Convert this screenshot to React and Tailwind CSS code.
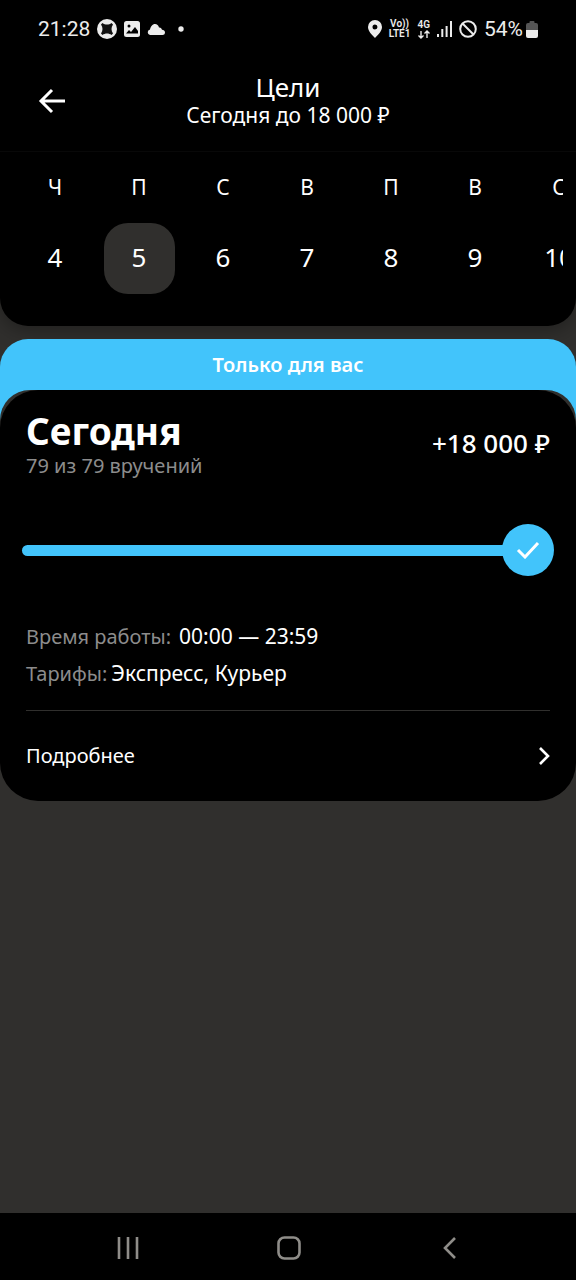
import clsx from 'clsx'

const days = [
  { name: 'Ч', date: 4 },
  { name: 'П', date: 5 },
  { name: 'С', date: 6 },
  { name: 'В', date: 7 },
  { name: 'П', date: 8 },
  { name: 'В', date: 9 },
  { name: 'С', date: 10 },
]

const goal = { done: 79, total: 79 }

function StatusBar() {
  return (
    <div className="h-14 pt-0.5 pl-[38px] pr-[38px] flex items-center justify-between font-[Roboto,sans-serif] text-[21px] leading-7 text-[#ececec]">
      <div className="flex items-center gap-[7px]">
        <span>21:28</span>
        <svg width="20" height="20" viewBox="0 0 20 20">
          <circle cx="10" cy="10" r="10" fill="currentColor" />
          <path d="M4 5.500 5.500 4C8 6 12 6 14.500 4L16 5.500c-2 3-2 6 0 9L14.500 16c-2.500-2-6.500-2-9 0L4 14.500c2-3 2-6 0-9z" fill="#111" />
        </svg>
        <svg width="16" height="16" viewBox="0 0 16 16">
          <rect width="16" height="16" rx="2.500" fill="currentColor" />
          <circle cx="5" cy="5" r="1.500" fill="#000" />
          <path d="M2 12.500 5 9l2 2 4-5 3 4v2.500z" fill="#000" />
        </svg>
        <svg width="18" height="11" viewBox="0 0 18 11">
          <path d="M3 11a2.800 2.800 0 0 1 0-5.500C3.500 2.500 5.500 0 8 0c2 0 3.500 1.300 4 3.500 1.500-.3 2.700.7 3 2.300 1.500 0 3 1 3 2.700S16.800 11 15.500 11z" fill="currentColor" />
        </svg>
        <svg width="18" height="6" viewBox="0 0 18 6">
          <circle cx="9" cy="3" r="2.700" fill="currentColor" />
        </svg>
      </div>
      <div className="flex items-center gap-[7px]">
        <svg width="14" height="18" viewBox="0 0 14 18">
          <path fillRule="evenodd" d="M7 0a7 7 0 0 1 7 7c0 4-4 8-7 11C4 15 0 11 0 7a7 7 0 0 1 7-7zm0 4.500a2.500 2.500 0 1 0 0 5 2.500 2.500 0 0 0 0-5z" fill="currentColor" />
        </svg>
        <div className="flex flex-col items-center text-[10px] leading-[10px] font-semibold">
          <span>Vo))</span>
          <span>LTE1</span>
        </div>
        <div className="flex flex-col items-center text-[10px] leading-[10px] font-semibold">
          <span>4G</span>
          <svg width="12" height="9" viewBox="0 0 12 9" fill="none" stroke="currentColor" strokeWidth="1.400">
            <path d="M3 1v7M.5 5.500 3 8l2.500-2.500M9 8V1M6.500 3.500 9 1l2.500 2.500" />
          </svg>
        </div>
        <svg width="15" height="16" viewBox="0 0 15 16" stroke="currentColor" strokeWidth="2">
          <path d="M1 13v3M5.300 8v8M9.600 5v11M14 0v16" />
        </svg>
        <svg width="18" height="18" viewBox="0 0 18 18" fill="none" stroke="currentColor" strokeWidth="2">
          <circle cx="9" cy="9" r="7.800" />
          <path d="m3.500 3.500 11 11" />
        </svg>
        <div className="flex items-center gap-[3px]">
          <span>54%</span>
          <svg width="12" height="17" viewBox="0 0 12 17">
            <path d="M3.500 2V1q0-1 1-1h3q1 0 1 1v1H10q2 0 2 2v5H0V4q0-2 2-2z" fill="#555" />
            <path d="M0 9h12v6q0 2-2 2H2q-2 0-2-2z" fill="currentColor" />
          </svg>
        </div>
      </div>
    </div>
  )
}

function Header() {
  return (
    <header className="h-24 px-6 pb-1.5 grid grid-cols-[56px_1fr_56px] items-center border-b border-[#080808]">
      <button type="button" aria-label="Назад" className="size-14 flex items-center justify-center">
        <svg width="28" height="26" viewBox="0 0 28 26" fill="none" stroke="currentColor" strokeWidth="3">
          <path d="M27 13H3M14 2 3 13l11 11" />
        </svg>
      </button>
      <div className="text-center">
        <h1 className="text-[26px] leading-7">Цели</h1>
        <p className="text-[21px] leading-7">Сегодня до 18 000 ₽</p>
      </div>
    </header>
  )
}

function Calendar() {
  return (
    <div className="mx-[13px] pt-5 pb-8 flex overflow-hidden">
      {days.map(day => (
        <button
          key={day.date}
          type="button"
          aria-pressed={day.date === 5}
          className="w-[84px] shrink-0 flex flex-col items-center gap-[21px]"
        >
          <span className="text-[21px] leading-[30px]">{day.name}</span>
          <span
            className={clsx(
              'size-[71px] pb-1 rounded-3xl flex items-center justify-center text-[26px] leading-8',
              day.date === 5 && 'bg-[#302f2d]'
            )}
          >
            {day.date}
          </span>
        </button>
      ))}
    </div>
  )
}

function Progress({ done, total }) {
  return (
    <div
      role="progressbar"
      aria-label="Вручения"
      aria-valuenow={done}
      aria-valuemax={total}
      className="-mx-1 h-[52px] flex items-center"
    >
      <div className="flex items-center justify-end" style={{ width: `${(done / total) * 100}%` }}>
        <div className="flex-1 h-[11px] rounded-l-full bg-[#42c4fb]" />
        <div className="-ml-1 size-[52px] rounded-full bg-[#42c4fb] flex items-center justify-center">
          <svg width="24" height="18" viewBox="0 0 24 18" fill="none" stroke="#fff" strokeWidth="3">
            <path d="m2 9 7 7L22 2" />
          </svg>
        </div>
      </div>
    </div>
  )
}

function GoalCard() {
  return (
    <section className="mt-[13px]">
      <div className="h-[87px] pt-3 rounded-t-[28px] bg-[#42c4fb] text-center text-[20px] leading-7 font-semibold">
        Только для вас
      </div>
      <div className="-mt-9 rounded-t-[30px] bg-[#302f2d]">
        <div className="px-[26px] pt-5 pb-6 rounded-[38px] bg-black">
          <div className="flex items-center justify-between">
            <div>
              <h2 className="text-[37px] leading-[42px] font-bold">Сегодня</h2>
              <p className="text-[20px] leading-7 text-[#8c8c8c]">
                {goal.done} из {goal.total} вручений
              </p>
            </div>
            <span className="pb-1 text-[26px] leading-8 font-medium">+18 000 ₽</span>
          </div>

          <div className="pt-11 pb-[42px]">
            <Progress done={goal.done} total={goal.total} />
          </div>

          <dl className="text-[21px] leading-[37px]">
            <div className="flex gap-2">
              <dt className="text-[20px] text-[#8c8c8c]">Время работы:</dt>
              <dd>00:00 — 23:59</dd>
            </div>
            <div className="flex gap-1">
              <dt className="text-[20px] text-[#8c8c8c]">Тарифы:</dt>
              <dd>Экспресс, Курьер</dd>
            </div>
          </dl>

          <a href="#details" className="mt-[18px] pt-6 flex items-center justify-between border-t border-[#302f2d] text-[20px] leading-[42px]">
            Подробнее
            <svg width="12" height="18" viewBox="0 0 12 18" fill="none" stroke="currentColor" strokeWidth="2.600">
              <path d="m2 1 8 8-8 8" />
            </svg>
          </a>
        </div>
      </div>
    </section>
  )
}

function NavBar() {
  return (
    <nav className="h-[67px] pt-0.5 pl-12 pr-[46px] grid grid-cols-3 bg-black text-[#8f8d89]">
      <button type="button" aria-label="Недавние" className="flex items-center justify-center">
        <svg width="22" height="22" viewBox="0 0 22 22" stroke="currentColor" strokeWidth="2.600">
          <path d="M2 0v22M11 0v22M20 0v22" />
        </svg>
      </button>
      <button type="button" aria-label="Домой" className="flex items-center justify-center">
        <svg width="24" height="24" viewBox="0 0 24 24" fill="none" stroke="currentColor" strokeWidth="2.600">
          <rect x="1.500" y="1.500" width="21" height="21" rx="6" />
        </svg>
      </button>
      <button type="button" aria-label="Назад" className="flex items-center justify-center">
        <svg width="14" height="22" viewBox="0 0 14 22" fill="none" stroke="currentColor" strokeWidth="2.600">
          <path d="M12 1 2 11l10 10" />
        </svg>
      </button>
    </nav>
  )
}

export default function App() {
  return (
    <div className="min-h-screen flex flex-col bg-[#302f2d] text-white font-['Noto_Sans',sans-serif]">
      <div className="rounded-b-[28px] bg-black shadow-[0_4px_20px_rgba(0,0,0,0.35)]">
        <StatusBar />
        <Header />
        <Calendar />
      </div>
      <main className="flex-1">
        <GoalCard />
      </main>
      <NavBar />
    </div>
  )
}
